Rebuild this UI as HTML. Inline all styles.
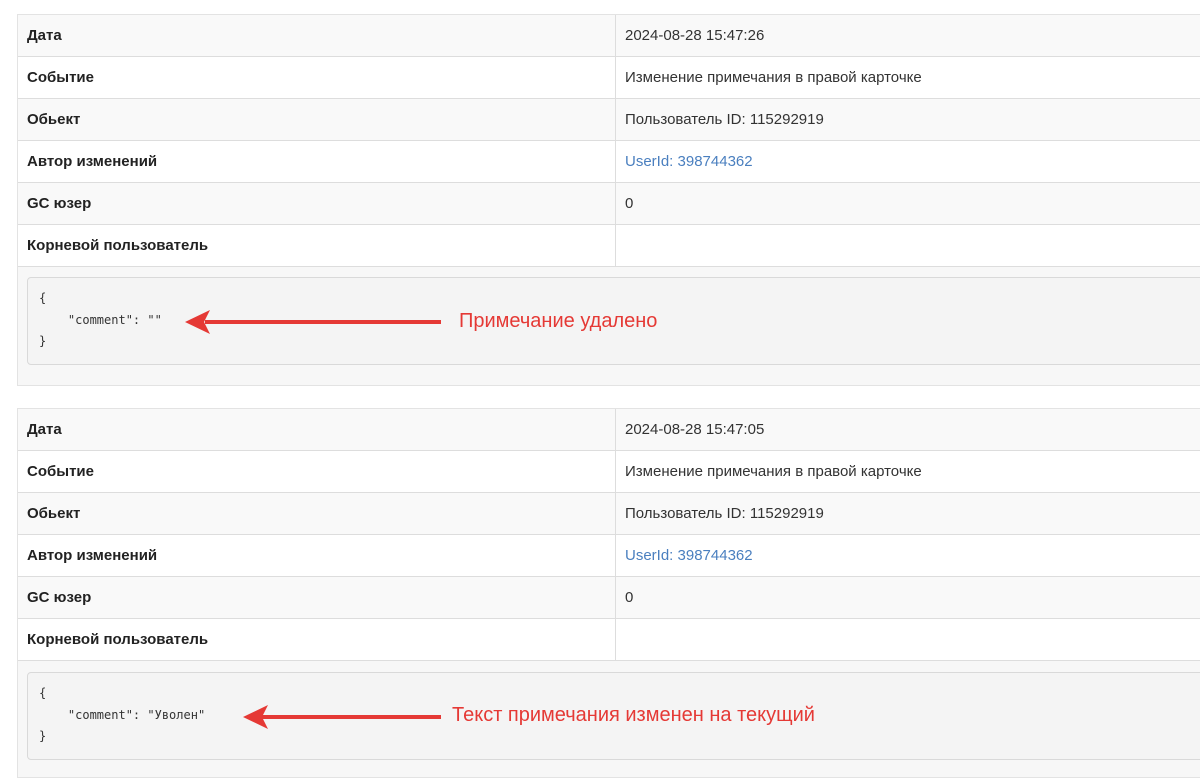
<!DOCTYPE html>
<html><head><meta charset="utf-8"><style>
body{margin:0;width:1200px;height:762px;background:#fff;overflow:hidden;position:relative;font-family:"Liberation Sans","DejaVu Sans",sans-serif;}
.blk{position:absolute;left:17px;width:1200px;border:1px solid #e3e3e3;background:#f7f7f7;box-sizing:border-box}
.row{height:42px;border-bottom:1px solid #dddddd;box-sizing:border-box;position:relative;font-size:15px;color:#333;line-height:41px}
.row.o{background:#f9f9f9}.row.e{background:#fff}
.k{position:absolute;left:9px;top:0;font-weight:bold;color:#222;font-size:15px}
.v{position:absolute;left:597px;top:0;height:41px;border-left:1px solid #dddddd;padding-left:9px;width:600px}
.lnk{color:#4a7fbf}
.pre{position:absolute;left:9px;width:1200px;height:88px;background:#f4f4f4;border:1px solid #d9d9d9;border-radius:4px;box-sizing:border-box;font-family:"DejaVu Sans Mono","Liberation Mono",monospace;font-size:12px;color:#333;line-height:21.5px;padding:10px 0 0 11px;white-space:pre}
.note{position:absolute;color:#e53935;font-size:20px;font-family:"Liberation Sans",sans-serif}
</style></head><body>

<div class="blk" style="top:14px;height:372px">
<div class="row o"><span class="k">Дата</span><span class="v">2024-08-28 15:47:26</span></div>
<div class="row e"><span class="k">Событие</span><span class="v">Изменение примечания в правой карточке</span></div>
<div class="row o"><span class="k">Обьект</span><span class="v">Пользователь ID: 115292919</span></div>
<div class="row e"><span class="k">Автор изменений</span><span class="v"><span class="lnk">UserId: 398744362</span></span></div>
<div class="row o"><span class="k">GC юзер</span><span class="v">0</span></div>
<div class="row e"><span class="k">Корневой пользователь</span><span class="v"></span></div>
<div class="pre" style="top:262px">{
    "comment": ""
}</div>
</div>

<div class="blk" style="top:408px;height:370px">
<div class="row o"><span class="k">Дата</span><span class="v">2024-08-28 15:47:05</span></div>
<div class="row e"><span class="k">Событие</span><span class="v">Изменение примечания в правой карточке</span></div>
<div class="row o"><span class="k">Обьект</span><span class="v">Пользователь ID: 115292919</span></div>
<div class="row e"><span class="k">Автор изменений</span><span class="v"><span class="lnk">UserId: 398744362</span></span></div>
<div class="row o"><span class="k">GC юзер</span><span class="v">0</span></div>
<div class="row e"><span class="k">Корневой пользователь</span><span class="v"></span></div>
<div class="pre" style="top:263px">{
    "comment": "Уволен"
}</div>
</div>

<svg style="position:absolute;left:0;top:0" width="1200" height="762">
<line x1="205" y1="322" x2="441" y2="322" stroke="#e53935" stroke-width="4"/>
<polygon points="185,322 210,310 204,322 210,334" fill="#e53935"/>
<line x1="262" y1="717" x2="441" y2="717" stroke="#e53935" stroke-width="4"/>
<polygon points="243,717 268,705 262,717 268,729" fill="#e53935"/>
</svg>
<div class="note" style="left:459px;top:310px">Примечание удалено</div>
<div class="note" style="left:452px;top:704px">Текст примечания изменен на текущий</div>
</body></html>
